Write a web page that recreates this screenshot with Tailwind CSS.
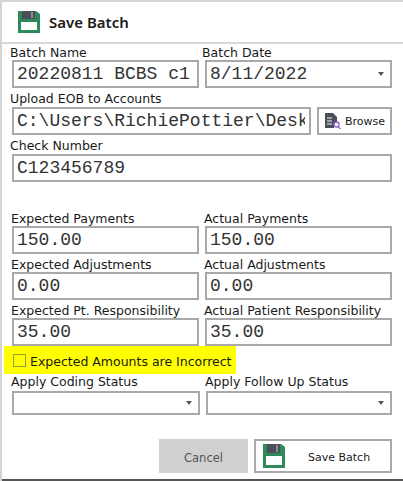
<!DOCTYPE html>
<html><head><meta charset="utf-8"><script src="https://cdn.jsdelivr.net/npm/@tailwindcss/browser@4"></script></head>
<body class="bg-white">
<div class="w-[403px] h-[481px] overflow-hidden bg-white border-l-2 border-t-2 border-[#d4d4d4] font-['DejaVu_Sans','Liberation_Sans',sans-serif] text-[12.5px] leading-[16px] text-[#1a1a1a] flex flex-col relative">
  <header class="h-[42px] shrink-0 border-b-2 border-[#d9d9d9] flex items-center pl-[16px] gap-[9px]">
    <svg width="22" height="22" viewBox="0 0 22 22"><path d="M0 0H18L22 3V22H0Z" fill="#2f8a5b"/><rect x="4" y="0" width="13" height="8" fill="#4b4f5a"/><rect x="13" y="1" width="2" height="6" fill="#8a8d94"/><rect x="3" y="11" width="16" height="8" fill="#fff"/></svg>
    <span class="font-['Noto_Sans',sans-serif] text-[15px] font-semibold">Save Batch</span>
  </header>
  <main class="flex-1 pl-[10px] pr-[11px] flex flex-col">
    <div class="grid grid-cols-[187px_187px] gap-x-[6px] mt-[2px]">
      <div><div class="-ml-[2px] h-[14px] leading-[14px]">Batch Name</div><div class="h-[28px] border-2 border-[#a9a9a9] pl-[3px] font-['Liberation_Mono',monospace] text-[18px] leading-[24px] text-[#333] whitespace-nowrap overflow-hidden">20220811 BCBS c1</div></div>
      <div><div class="-ml-[3px] h-[14px] leading-[14px]">Batch Date</div><div class="h-[28px] border-2 border-[#a9a9a9] pl-[3px] font-['Liberation_Mono',monospace] text-[18px] leading-[24px] text-[#333] flex justify-between pr-[6px]"><span>8/11/2022</span><span class="mt-[10px] w-0 h-0 border-x-[3px] border-x-transparent border-t-[4px] border-t-[#555]"></span></div></div>
    </div>
    <div class="-ml-[2px] mt-[3px] h-[14px]">Upload EOB to Accounts</div>
    <div class="flex gap-[6px] mt-[2px]">
      <div class="w-[299px] h-[28px] border-2 border-[#a9a9a9] pl-[3px] pr-[4px] font-['Liberation_Mono',monospace] text-[18px] leading-[24px] text-[#333]"><div class="whitespace-nowrap overflow-hidden">C:\Users\RichiePottier\Desktop</div></div>
      <div class="w-[75px] h-[28px] border-2 border-[#a9a9a9] flex items-center pl-[6px] gap-[4px] text-[11px]">
        <svg width="16" height="16" viewBox="0 0 16 16"><path d="M0 0H8L12 4V9H9V15H0Z" fill="#4b4f5a"/><path d="M2 5H7M2 8H7M2 11H7" stroke="#fff"/><circle cx="11.5" cy="11.5" r="2.5" fill="none" stroke="#8a5cc7" stroke-width="1.3"/><path d="M13 13.5L15.5 16" stroke="#8a5cc7" stroke-width="1.3"/></svg>
        <span class="mt-[2px]">Browse</span>
      </div>
    </div>
    <div class="-ml-[2px] mt-[3px] h-[14px]">Check Number</div>
    <div class="w-[380px] h-[28px] mt-[2px] border-2 border-[#a9a9a9] pl-[3px] font-['Liberation_Mono',monospace] text-[18px] leading-[24px] text-[#333]">C123456789</div>
    <div class="grid grid-cols-[187px_187px] gap-x-[6px] gap-y-[3px] mt-[29px]">
      <div><div class="-ml-[1px] h-[14px]">Expected Payments</div><div class="h-[28px] mt-[1px] border-2 border-[#a9a9a9] pl-[3px] font-['Liberation_Mono',monospace] text-[18px] leading-[24px] text-[#333]">150.00</div></div>
      <div><div class="-ml-[1px] h-[14px]">Actual Payments</div><div class="h-[28px] mt-[1px] border-2 border-[#a9a9a9] pl-[3px] font-['Liberation_Mono',monospace] text-[18px] leading-[24px] text-[#333]">150.00</div></div>
      <div><div class="-ml-[1px] h-[14px]">Expected Adjustments</div><div class="h-[28px] mt-[1px] border-2 border-[#a9a9a9] pl-[3px] font-['Liberation_Mono',monospace] text-[18px] leading-[24px] text-[#333]">0.00</div></div>
      <div><div class="-ml-[1px] h-[14px]">Actual Adjustments</div><div class="h-[28px] mt-[1px] border-2 border-[#a9a9a9] pl-[3px] font-['Liberation_Mono',monospace] text-[18px] leading-[24px] text-[#333]">0.00</div></div>
      <div><div class="-ml-[1px] h-[14px]">Expected Pt. Responsibility</div><div class="h-[28px] mt-[1px] border-2 border-[#a9a9a9] pl-[3px] font-['Liberation_Mono',monospace] text-[18px] leading-[24px] text-[#333]">35.00</div></div>
      <div><div class="-ml-[1px] h-[14px]">Actual Patient Responsibility</div><div class="h-[28px] mt-[1px] border-2 border-[#a9a9a9] pl-[3px] font-['Liberation_Mono',monospace] text-[18px] leading-[24px] text-[#333]">35.00</div></div>
    </div>
    <div class="-ml-[8px] w-[232px] h-[28px] bg-[#ffff00] flex items-center pl-[9px] gap-[4px]">
      <span class="w-[13px] h-[13px] border border-[#9a9a40]"></span><span class="mt-[3px]">Expected Amounts are Incorrect</span>
    </div>
    <div class="grid grid-cols-[188px_186px] gap-x-[6px]">
      <div><div class="-ml-[1px] h-[14px]">Apply Coding Status</div><div class="h-[24px] mt-[3px] border-2 border-[#a9a9a9] flex justify-end items-center pr-[6px]"><span class="w-0 h-0 border-x-[3px] border-x-transparent border-t-[4px] border-t-[#555]"></span></div></div>
      <div><div class="-ml-[1px] h-[14px]">Apply Follow Up Status</div><div class="h-[24px] mt-[3px] border-2 border-[#a9a9a9] flex justify-end items-center pr-[6px]"><span class="w-0 h-0 border-x-[3px] border-x-transparent border-t-[4px] border-t-[#555]"></span></div></div>
    </div>
    <div class="flex justify-end gap-[6px] mt-[24px]">
      <div class="w-[89px] h-[34px] bg-[#d0d0d0] text-[#555] text-[11.5px] flex items-center justify-center pt-[3px]">Cancel</div>
      <div class="w-[138px] h-[34px] border-2 border-[#a9a9a9] flex items-center pl-[7px] text-[11px]">
        <svg width="22" height="24" viewBox="0 0 22 24"><path d="M0 0H18L22 3V24H0Z" fill="#2f8a5b"/><rect x="4" y="0" width="13" height="9" fill="#4b4f5a"/><rect x="13" y="1" width="2" height="7" fill="#8a8d94"/><rect x="3" y="12" width="16" height="9" fill="#fff"/></svg>
        <span class="ml-[23px] mt-[3px]">Save Batch</span>
      </div>
    </div>
  </main>
  <div class="absolute left-0 right-0 bottom-0 h-[2px] bg-[#555]"></div>
</div>
</body></html>
